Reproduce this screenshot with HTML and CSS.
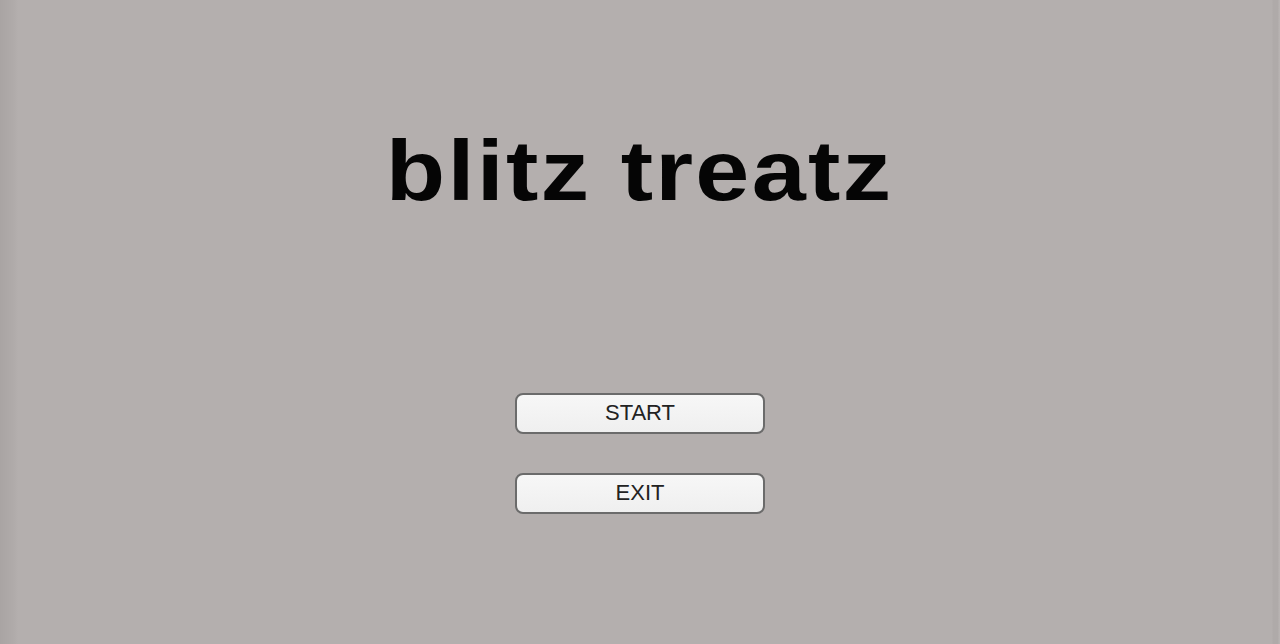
FILE: index.html
```html
<!DOCTYPE html>
<html lang="en">
<head>
    <meta charset="UTF-8">
    <meta name="viewport" content="width=device-width, initial-scale=1.0">
    <title>blitz treatz</title>
    <link rel="stylesheet" href="styles.css">
</head>
<body>
    <main class="menu">
        <h1 class="title"><span class="title-text">blitz treatz</span></h1>
        <div class="buttons">
            <button class="menu-btn" id="startBtn">START</button>
            <button class="menu-btn" id="exitBtn">EXIT</button>
        </div>
    </main>
</body>
</html>
```

FILE: styles.css
```css
html, body {
    height: 100%;
}

body {
    font-family: "Liberation Sans", Arial, sans-serif;
    margin: 0;
    padding: 0;
    background-color: #b4afae;
    /* darker strips along the window edges */
    background-image:
        linear-gradient(to right, #a9a4a3 0px, #b0abaa 14px, #b4afae 18px),
        linear-gradient(to left, #b8b3b2 0px, #b8b3b2 1px, #afaaa9 2px, #afaaa9 7px, #b4afae 8px);
    background-size: 50% 100%, 50% 100%;
    background-position: left top, right top;
    background-repeat: no-repeat;
    overflow: hidden;
}

.menu {
    display: flex;
    flex-direction: column;
    align-items: center;
}

.title {
    margin: 106px 0 0 0;
    font-size: 86px;
    font-weight: bold;
    letter-spacing: 2px;
    line-height: 128px;
    color: #050505;
}

/* the logo type is drawn a little wider than the font */
.title-text {
    display: inline-block;
    transform: scaleX(1.13);
}

.buttons {
    display: flex;
    flex-direction: column;
    gap: 39px;
    margin-top: 159px;
}

.menu-btn {
    width: 250px;
    height: 41px;
    font-family: "Liberation Sans", Arial, sans-serif;
    font-size: 22px;
    color: #222;
    background: linear-gradient(to bottom, #f7f7f7, #efefef);
    border: 2px solid #6b6b6b;
    border-radius: 8px;
    cursor: pointer;
    padding: 0 0 1px 0;
}

.menu-btn:hover {
    background: #ffffff;
}
```
